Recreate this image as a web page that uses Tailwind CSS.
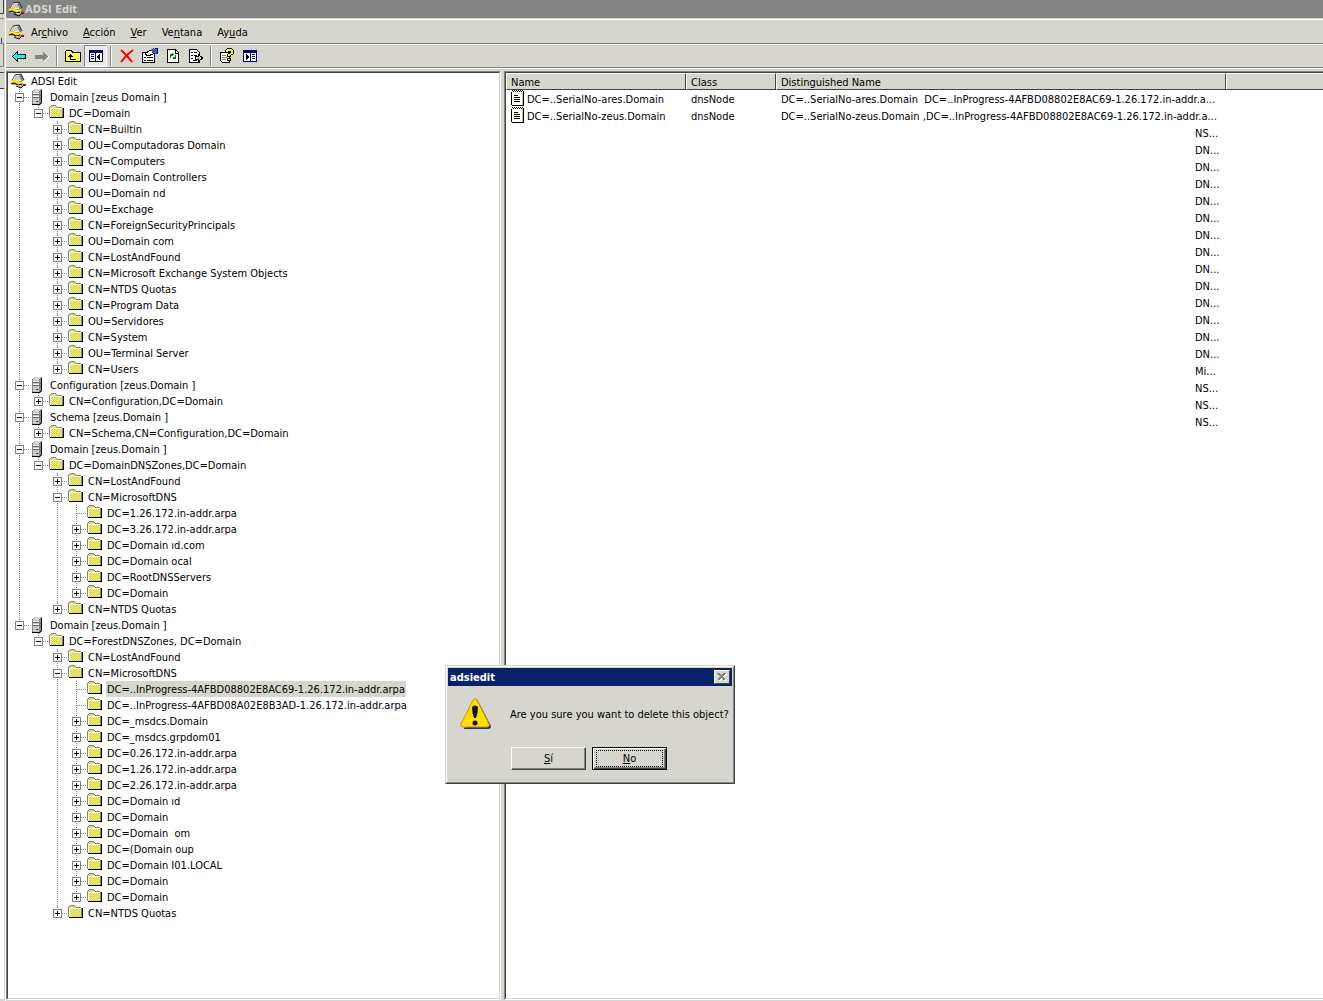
<!DOCTYPE html>
<html lang="es">
<head>
<meta charset="utf-8">
<title>ADSI Edit</title>
<script src="https://cdn.jsdelivr.net/npm/@tailwindcss/browser@4"></script>
</head>
<body class="h-screen overflow-hidden bg-[#d6d6ce] font-['DejaVu_Sans_Condensed','Noto_Sans',sans-serif] text-[11px] leading-4 text-black">

<svg class="absolute size-0" aria-hidden="true">
  <defs>
    <pattern id="dither" width="2" height="2" patternUnits="userSpaceOnUse">
      <rect width="2" height="2" fill="#ffff00"/><rect width="1" height="1" fill="#c6c6c6"/><rect x="1" y="1" width="1" height="1" fill="#c6c6c6"/>
    </pattern>
    <symbol id="folder" viewBox="0 0 16 16" shape-rendering="crispEdges">
      <path d="M2 2h1v-1h5v1h1v1h6v9h-14v-9h1z" fill="url(#dither)"/>
      <path d="M3 0h5v1h-5zM2 1h1v1h-1zM8 1h1v1h-1zM1 2h1v1h-1zM9 2h5v1h-5zM1 3h1v9h-1zM14 3h1v9h-1z" fill="#848484"/>
      <path d="M2 3h12v1h-11v8h-1z" fill="#fff"/>
      <path d="M15 3h1v10h-1zM2 12h14v1h-14z" fill="#000"/>
    </symbol>
    <symbol id="server" viewBox="0 0 16 16" shape-rendering="crispEdges">
      <path d="M5 0h8v14l-2 2h-8v-13z" fill="#848484"/>
      <path d="M5 0h7v1h-1v1h-1v1h-6v-1h1z" fill="#d6d6ce"/>
      <path d="M4 3h6v12h-6z" fill="#c6c6c6"/>
      <path d="M3 3h1v12h-1z" fill="#848484"/>
      <path d="M4 5h6v1h-6zM4 8h6v1h-6z" fill="#636363"/>
      <path d="M4 4h6v1h-6zM4 7h6v1h-6z" fill="#fff"/>
      <path d="M12 1h1v13h-1zM11 14h1v1h-1zM3 15h8v1h-8z" fill="#000"/>
      <path d="M7 12h2v1h-2z" fill="#f00"/>
    </symbol>
    <symbol id="adsi" viewBox="0 0 16 16">
      <path d="M0 9L4 6L10 8L14 12L11 15L7 12L3 12z" fill="#a5a5a5"/>
      <path d="M5 2L11 1L14 7L8 9L2 8z" fill="#efefef"/>
      <path d="M11 1L14 7L12 9L9 3z" fill="#848484"/>
      <path d="M5 2L11 1L14 7" fill="none" stroke="#212121"/>
      <path d="M5 4h5M4 6h6" fill="none" stroke="#a5a5a5"/>
      <path d="M5 2L2 7L9 9L13 8" fill="none" stroke="#636363"/>
      <path d="M1 9L4 8L9 10L13 9" fill="none" stroke="#ffef00" stroke-width="2"/>
      <path d="M1 11L4 10L8 12L12 11M6 13L11 15L14 12" fill="none" stroke="#000"/>
      <path d="M8 12L11 13" fill="none" stroke="#ffef00"/>
      <path d="M13 11h3v2h-3z" fill="#bd0000"/>
    </symbol>
    <symbol id="note" viewBox="0 0 14 17" shape-rendering="crispEdges">
      <path d="M1 2h11v14h-11z" fill="#fff"/>
      <path d="M0 2h1v13h-1zM1 0h1v1h-1zM3 0h1v1h-1zM5 0h1v1h-1zM7 0h1v1h-1zM9 0h1v1h-1zM11 0h1v1h-1zM2 1h1v1h-1zM4 1h1v1h-1zM6 1h1v1h-1zM8 1h1v1h-1zM10 1h1v1h-1zM12 1h1v1h-1z" fill="#000"/>
      <path d="M11 2h1v13h-1z" fill="#c6c6c6"/>
      <path d="M12 2h1v14h-1zM1 15h12v1h-12zM3 5h4v1h-4zM3 7h6v1h-6zM3 9h6v1h-6zM3 11h6v1h-6z" fill="#000"/>
    </symbol>
  </defs>
</svg>

<div class="flex h-full">
  <!-- edge of the window behind -->
  <div class="flex w-[6px] shrink-0 flex-col border-r border-white" aria-hidden="true">
    <div class="h-[14px] w-1 border-r border-b border-[#424242]"></div>
    <div class="h-1"></div>
    <div class="h-5 w-1 border-t border-[#848484]"></div>
    <div class="h-[5px] w-[2px] border-r border-[#424242]"></div>
    <div class="h-6 w-1 border-t border-r border-b border-[#848484]"></div>
    <div class="h-[5px]"></div>
    <div class="h-[17px] w-1 border-t border-b border-[#424242]"></div>
    <div class="w-1 flex-1 bg-white"></div>
    <div class="h-[2px]"></div>
  </div>

  <main class="flex min-w-0 flex-1 flex-col">
    <header class="flex h-[18px] items-center gap-px bg-[#848484] pl-[2px] text-[#d6d6ce]">
      <svg class="size-4"><use href="#adsi"/></svg>
      <h1 class="pt-[2px] font-bold">ADSI Edit</h1>
    </header>

    <nav class="mt-px flex h-[25px] items-center border-t border-b border-t-white border-b-[#848484] pl-[2px]">
      <svg class="mr-[7px] size-4"><use href="#adsi"/></svg>
      <div class="flex gap-[15px] pt-[2px]">
        <button>Ar<u>c</u>hivo</button>
        <button><u>A</u>cción</button>
        <button><u>V</u>er</button>
        <button>Ve<u>n</u>tana</button>
        <button>Ay<u>u</u>da</button>
      </div>
    </nav>

    <div role="toolbar" class="flex h-6 items-center border-t border-b border-t-white border-b-[#848484] pl-px">
      <button class="flex h-[22px] w-[23px] items-center justify-center" aria-label="Atrás">
        <svg class="size-4" viewBox="0 0 16 16" shape-rendering="crispEdges"><path d="M6 3h1v3h8v5h-8v3h-1v-1h-1v-1h-1v-1h-1v-1h-1v-1h-1v-1h1v-1h1v-1h1v-1h1v-1h1z" fill="#000"/><path d="M5 5h1v2h8v3h-8v2h-1v-1h-1v-1h-1v-1h-1v-1h1v-1h1v-1h1z" fill="#00ffff"/></svg>
      </button>
      <button class="flex h-[22px] w-[23px] items-center justify-center" aria-label="Adelante">
        <svg class="size-4" viewBox="0 0 16 16" shape-rendering="crispEdges"><path d="M10 13v1h1v-1h1v-1h1v-1h1v-1h1v-2h-1v2h-1v1h-1v1h-1v1zM2 10h8v1h-8z" fill="#fff"/><path d="M1 7h8v-4l5 5.500l-5 5v-3h-8z" fill="#848484"/></svg>
      </button>
      <span class="mx-[3px] h-5 w-[2px] border-l border-l-[#848484] bg-white"></span>
      <button class="flex h-[22px] w-[23px] items-center justify-center" aria-label="Subir un nivel">
        <svg class="size-4" viewBox="0 0 16 16" shape-rendering="crispEdges"><path d="M.5 13.500v-10l1-1h5l1 2h8v9z" fill="#ffff52" stroke="#000"/><path d="M5 6h1v1h1v1h1v1h-2v2h5v1h-6v-3h-2v-1h1v-1h1z" fill="#000"/></svg>
      </button>
      <button class="flex h-[22px] w-[23px] items-center justify-center border border-t-[#848484] border-r-white border-b-white border-l-[#848484] bg-[#e9e9e5]" aria-label="Mostrar árbol" aria-pressed="true">
        <svg class="size-4" viewBox="0 0 16 16" shape-rendering="crispEdges"><path d="M1 2h14v12h-14z" fill="#000084"/><path d="M2 5h5v8h-5zM8 5h6v8h-6z" fill="#fff"/><path d="M3 6h3v1h-3zM3 8h3v1h-3zM3 10h3v1h-3z" fill="#000084"/><path d="M12 6v6h-1v-1h-1v-1h-1v-2h1v-1h1v-1z" fill="#000"/></svg>
      </button>
      <span class="mx-[3px] h-5 w-[2px] border-l border-l-[#848484] bg-white"></span>
      <button class="flex h-[22px] w-[23px] items-center justify-center" aria-label="Eliminar">
        <svg class="size-4" viewBox="0 0 16 16"><path d="M2 2Q8 7 13 14M14 2Q7 7 2 14" fill="none" stroke="#f00" stroke-width="2"/></svg>
      </button>
      <button class="flex h-[22px] w-[23px] items-center justify-center" aria-label="Propiedades">
        <svg class="size-4" viewBox="0 0 16 16" shape-rendering="crispEdges"><path d="M.5 4.500h12v10h-12z" fill="#fff" stroke="#000"/><path d="M2 9h2v1h-2zM5 9h6v1h-6zM2 12h2v1h-2zM5 12h6v1h-6z" fill="#000"/><path d="M3 6l4-3l4-2v5l-5 2z" fill="#fff" stroke="#000"/><path d="M9 1h4v-1h3v6h-3v-1h-3z" fill="#4252c6"/><path d="M13 0h3v6h-1v-5h-2z" fill="#000063"/></svg>
      </button>
      <button class="flex h-[22px] w-[23px] items-center justify-center" aria-label="Actualizar">
        <svg class="size-4" viewBox="0 0 16 16" shape-rendering="crispEdges"><path d="M2.500 1.500h8l3 3v10h-11z" fill="#fff" stroke="#000"/><path d="M10 1v4h4" fill="none" stroke="#000"/><path d="M5 6h2v-1l2 1.500l-2 2v-1h-1v2h-1zM11 11h-2v1l-2-2l2-2v1h1v-2h1z" fill="#008400"/></svg>
      </button>
      <button class="flex h-[22px] w-[23px] items-center justify-center" aria-label="Exportar lista">
        <svg class="size-4" viewBox="0 0 16 16" shape-rendering="crispEdges"><path d="M1.500 1.500h7l3 3v10h-10z" fill="#fff" stroke="#000"/><path d="M3 4h2v1h-2zM3 7h2v1h-2zM3 10h2v1h-2z" fill="#000084"/><path d="M6 4h3v1h-3zM6 7h3v1h-3zM5 12h4v1h-4z" fill="#000"/><path d="M7.500 8.500h3v-2l4 3.500l-4 3.500v-2h-3z" fill="#c6c6c6" stroke="#000"/></svg>
      </button>
      <span class="mx-[3px] h-5 w-[2px] border-l border-l-[#848484] bg-white"></span>
      <button class="flex h-[22px] w-[23px] items-center justify-center" aria-label="Ayuda">
        <svg class="size-4" viewBox="0 0 16 16" shape-rendering="crispEdges"><path d="M1.500 4.500h9v10h-7l-2-2z" fill="#fff" stroke="#000"/><path d="M3 7h4v1h-4zM3 9h5v1h-5zM3 11h4v1h-4z" fill="#848484"/><path d="M6.500 4.500v-2l2-2h4l2 2v3l-3 2v1h-3v-2l3-2v-1h-2v1zM8.500 10.500h3v2h-3z" fill="#ffff00" stroke="#000"/></svg>
      </button>
      <button class="flex h-[22px] w-[23px] items-center justify-center" aria-label="Panel de acciones">
        <svg class="size-4" viewBox="0 0 16 16" shape-rendering="crispEdges"><path d="M1 2h14v12h-14z" fill="#000084"/><path d="M2 5h6v8h-6zM9 5h5v8h-5z" fill="#fff"/><path d="M10 6h3v1h-3zM10 8h3v1h-3zM10 10h3v1h-3z" fill="#000084"/><path d="M4 6v6h1v-1h1v-1h1v-2h-1v-1h-1v-1z" fill="#000"/></svg>
      </button>
    </div>

    <div class="flex min-h-0 flex-1 border-t border-white pt-[2px] pb-px">
      <section class="flex w-[495px] shrink-0 border border-t-[#848484] border-r-white border-b-white border-l-[#848484]">
        <ul id="tree" role="tree" class="min-w-0 flex-1 overflow-hidden border border-t-[#424242] border-r-[#d6d6ce] border-b-[#d6d6ce] border-l-[#424242] bg-white pl-[2px] leading-[18px] whitespace-pre"></ul>
      </section>
      <section class="ml-[3px] flex min-w-0 flex-1 border border-r-0 border-t-[#848484] border-b-white border-l-[#848484]">
        <div class="min-w-0 flex-1 overflow-hidden border border-r-0 border-t-[#424242] border-b-[#d6d6ce] border-l-[#424242] bg-white">
          <table class="w-full table-fixed border-separate border-spacing-0 text-left leading-[15px] whitespace-pre">
            <colgroup><col class="w-[180px]"><col class="w-[90px]"><col class="w-[450px]"><col></colgroup>
            <thead>
              <tr class="h-[17px] bg-[#d6d6ce] leading-[13px]">
                <th class="border border-t-white border-r-[#424242] border-b-[#424242] border-l-white p-0 pt-[2px] pl-1 font-normal">Name</th>
                <th class="border border-t-white border-r-[#424242] border-b-[#424242] border-l-white p-0 pt-[2px] pl-1 font-normal">Class</th>
                <th class="border border-t-white border-r-[#424242] border-b-[#424242] border-l-white p-0 pt-[2px] pl-1 font-normal">Distinguished Name</th>
                <th class="border border-r-0 border-t-white border-b-[#424242] border-l-white p-0"></th>
              </tr>
            </thead>
            <tbody id="rows"></tbody>
          </table>
        </div>
      </section>
    </div>
  </main>
</div>

<div role="dialog" aria-labelledby="dlg-title" class="absolute top-[665px] left-[445px] w-[290px] border border-t-[#d6d6ce] border-r-[#424242] border-b-[#424242] border-l-[#d6d6ce] bg-[#d6d6ce]">
  <div class="border border-t-white border-r-[#848484] border-b-[#848484] border-l-white p-px">
    <div class="flex h-[18px] items-center justify-between bg-[#08216b] px-[2px] text-white">
      <h2 id="dlg-title" class="pt-[2px] font-bold">adsiedit</h2>
      <button aria-label="Cerrar" class="flex h-[14px] w-4 items-center justify-center border border-t-white border-r-[#424242] border-b-[#424242] border-l-white bg-[#d6d6ce]">
        <svg class="h-2 w-[10px]" viewBox="0 0 10 8" shape-rendering="crispEdges"><path d="M2 1l7 7M9 1l-7 7" stroke="#fff" stroke-width="1.500"/><path d="M1 0l7 7M8 0l-7 7" stroke="#848484" stroke-width="1.500"/></svg>
      </button>
    </div>
    <div class="flex items-center gap-[18px] pt-3 pl-3">
      <svg class="size-8" viewBox="0 0 32 32">
        <path d="M14 3q2-3 4 0l13 25q0 3-3 3h-24z" fill="#21317b"/>
        <path d="M13 2q2-3 4 0l12 24q1 3-2 3h-24q-3 0-2-3z" fill="#ffde00" stroke="#c69c00"/>
        <path d="M12 9q3-3 6 0q0 6-2 11h-2q-2-5-2-11z" fill="#101040"/><circle cx="15" cy="25" r="2.500" fill="#101040"/>
      </svg>
      <p class="pt-[2px]">Are you sure you want to delete this object?</p>
    </div>
    <div class="flex gap-[6px] pt-[17px] pb-[11px] pl-[63px]">
      <button class="h-[23px] w-[75px] border border-t-white border-r-[#424242] border-b-[#424242] border-l-white shadow-[inset_-1px_-1px_#848484]"><u>S</u>í</button>
      <button class="h-[23px] w-[75px] border border-black p-px shadow-[inset_1px_1px_#fff,inset_-1px_-1px_#424242,inset_-2px_-2px_#848484]"><span class="mx-[2px] flex h-[17px] items-center justify-center border border-dotted border-black"><u>N</u>o</span></button>
    </div>
  </div>
</div>

<script>
// One entry per tree row: [guides, icon, label, selected].
// Guides, one letter per column: "|" line, " " blank, "+"/"-" box, "t" tee;
// a box that ends its branch is written "p" (collapsed) or "m" (expanded).
const tree = [
  ["", "adsi", "ADSI Edit"],
  ["-", "server", "Domain [zeus Domain ]"],
  ["|m", "folder", "DC=Domain"],
  ["| +", "folder", "CN=Builtin"],
  ["| +", "folder", "OU=Computadoras Domain"],
  ["| +", "folder", "CN=Computers"],
  ["| +", "folder", "OU=Domain Controllers"],
  ["| +", "folder", "OU=Domain nd"],
  ["| +", "folder", "OU=Exchage"],
  ["| +", "folder", "CN=ForeignSecurityPrincipals"],
  ["| +", "folder", "OU=Domain com"],
  ["| +", "folder", "CN=LostAndFound"],
  ["| +", "folder", "CN=Microsoft Exchange System Objects"],
  ["| +", "folder", "CN=NTDS Quotas"],
  ["| +", "folder", "CN=Program Data"],
  ["| +", "folder", "OU=Servidores"],
  ["| +", "folder", "CN=System"],
  ["| +", "folder", "OU=Terminal Server"],
  ["| p", "folder", "CN=Users"],
  ["-", "server", "Configuration [zeus.Domain ]"],
  ["|p", "folder", "CN=Configuration,DC=Domain"],
  ["-", "server", "Schema [zeus.Domain ]"],
  ["|p", "folder", "CN=Schema,CN=Configuration,DC=Domain"],
  ["-", "server", "Domain [zeus.Domain ]"],
  ["|m", "folder", "DC=DomainDNSZones,DC=Domain"],
  ["| +", "folder", "CN=LostAndFound"],
  ["| -", "folder", "CN=MicrosoftDNS"],
  ["| |t", "folder", "DC=1.26.172.in-addr.arpa"],
  ["| |+", "folder", "DC=3.26.172.in-addr.arpa"],
  ["| |+", "folder", "DC=Domain ıd.com"],
  ["| |+", "folder", "DC=Domain ocal"],
  ["| |+", "folder", "DC=RootDNSServers"],
  ["| |p", "folder", "DC=Domain"],
  ["| p", "folder", "CN=NTDS Quotas"],
  ["m", "server", "Domain [zeus.Domain ]"],
  [" m", "folder", "DC=ForestDNSZones, DC=Domain"],
  ["  +", "folder", "CN=LostAndFound"],
  ["  -", "folder", "CN=MicrosoftDNS"],
  ["  |t", "folder", "DC=..InProgress-4AFBD08802E8AC69-1.26.172.in-addr.arpa", true],
  ["  |t", "folder", "DC=..InProgress-4AFBD08A02E8B3AD-1.26.172.in-addr.arpa"],
  ["  |+", "folder", "DC=_msdcs.Domain"],
  ["  |+", "folder", "DC=_msdcs.grpdom01"],
  ["  |+", "folder", "DC=0.26.172.in-addr.arpa"],
  ["  |+", "folder", "DC=1.26.172.in-addr.arpa"],
  ["  |+", "folder", "DC=2.26.172.in-addr.arpa"],
  ["  |+", "folder", "DC=Domain ıd"],
  ["  |+", "folder", "DC=Domain"],
  ["  |+", "folder", "DC=Domain  om"],
  ["  |+", "folder", "DC=(Domain oup"],
  ["  |+", "folder", "DC=Domain I01.LOCAL"],
  ["  |+", "folder", "DC=Domain"],
  ["  |p", "folder", "DC=Domain"],
  ["  p", "folder", "CN=NTDS Quotas"],
];

function guide(kind) {
  if (kind === " ") return '<svg class="h-4 w-[19px] shrink-0"></svg>';
  const end = "pm".includes(kind) ? 8 : 16;
  let s = `<path d="M9.5 0V${end}" stroke="#848484" stroke-dasharray="1 1"/>`;
  if (kind !== "|") s += '<path d="M10 8.5H19" stroke="#848484" stroke-dasharray="1 1"/>';
  if ("+-pm".includes(kind)) {
    s += '<path d="M5.5 4.5h8v8h-8z" fill="#fff" stroke="#848484"/><path d="M7 8.5h5" stroke="#000"/>';
    if ("+p".includes(kind)) s += '<path d="M9.5 6v5" stroke="#000"/>';
  }
  return `<svg class="h-4 w-[19px] shrink-0" shape-rendering="crispEdges" fill="none">${s}</svg>`;
}

document.getElementById("tree").innerHTML = tree.map(([g, icon, label, sel]) =>
  `<li role="treeitem" class="flex h-4">${[...g].map(guide).join("")}` +
  `<svg class="mr-1 size-4 shrink-0"><use href="#${icon}"/></svg>` +
  `<span class="${sel ? "bg-[#d6d6ce] px-px" : "px-px"}">${label}</span></li>`).join("");

const objects = [
  ["DC=..SerialNo-ares.Domain", "DC=..SerialNo-ares.Domain  DC=..InProgress-4AFBD08802E8AC69-1.26.172.in-addr.a..."],
  ["DC=..SerialNo-zeus.Domain", "DC=..SerialNo-zeus.Domain ,DC=..InProgress-4AFBD08802E8AC69-1.26.172.in-addr.a..."],
];
const tails = ["NS", ...Array(13).fill("DN"), "Mi", "NS", "NS", "NS"];

document.getElementById("rows").innerHTML =
  objects.map(([name, dn]) =>
    `<tr class="h-[17px]"><td class="p-0 pl-[5px]"><div class="flex h-[17px] gap-[2px]"><svg class="h-[17px] w-[14px]"><use href="#note"/></svg><span class="pt-[2px]">${name}</span></div></td>` +
    `<td class="p-0 pt-[2px] pl-[5px]">dnsNode</td><td class="p-0 pt-[2px] pl-[5px]">${dn}</td><td class="p-0"></td></tr>`).join("") +
  tails.map(t =>
    `<tr class="h-[17px]"><td class="p-0"></td><td class="p-0"></td><td class="p-0 pt-[2px] pl-[419px]">${t}...</td><td class="p-0"></td></tr>`).join("");
</script>
</body>
</html>
